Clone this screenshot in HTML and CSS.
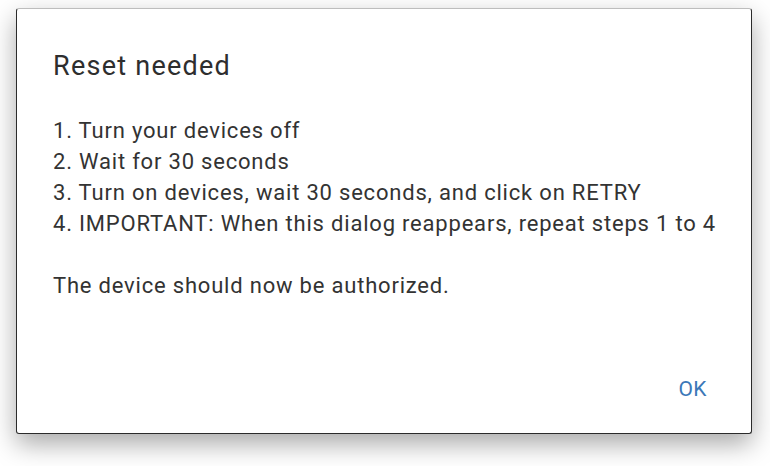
FILE: index.html
```html
<!DOCTYPE html>
<html lang="en">
<head>
    <meta charset="UTF-8">
    <title>Reset needed</title>
    <link rel="stylesheet" href="styles.css">
</head>
<body>
    <div class="dialog">
        <h2 class="dialog-title">Reset needed</h2>
        <div class="dialog-body">
            <p>1. Turn your devices off<br>
            2. Wait for 30 seconds<br>
            3. Turn on devices, wait 30 seconds, and click on RETRY<br>
            4. IMPORTANT: When this dialog reappears, repeat steps 1 to 4</p>
            <p>The device should now be authorized.</p>
        </div>
        <div class="dialog-actions">
            <button type="button" class="btn-ok">OK</button>
        </div>
    </div>
</body>
</html>
```

FILE: styles.css
```css
html, body {
    height: 100%;
}
body {
    margin: 0;
    padding-top: 8px;
    box-sizing: border-box;
    background: #fff;
    font-family: Roboto, "Liberation Sans", sans-serif;
    color: #333;
}
.dialog {
    box-sizing: border-box;
    width: 736px;
    height: 426px;
    margin: 0 0 0 16px;
    background: #fff;
    border: 1px solid #2b2b2b;
    border-top-color: #bdbdbd;
    border-radius: 3px;
    box-shadow: 0 10px 26px rgba(0, 0, 0, 0.34);
    display: flex;
    flex-direction: column;
    padding: 0 36px;
}
.dialog-title {
    margin: 40px 0 0 0;
    font-size: 27px;
    font-weight: 400;
    line-height: 34px;
    letter-spacing: 1.25px;
    color: #2e2e2e;
}
.dialog-body {
    margin-top: 32px;
    font-size: 22px;
    line-height: 31px;
    letter-spacing: 0.8px;
    white-space: nowrap;
}
.dialog-body p {
    margin: 0 0 31px 0;
}
.dialog-actions {
    margin-top: auto;
    margin-bottom: 26px;
    display: flex;
    justify-content: flex-end;
}
.btn-ok {
    background: none;
    border: none;
    font-family: inherit;
    font-size: 21px;
    letter-spacing: 0.5px;
    color: #3b78b8;
    padding: 6px 8px;
    cursor: pointer;
}
```
